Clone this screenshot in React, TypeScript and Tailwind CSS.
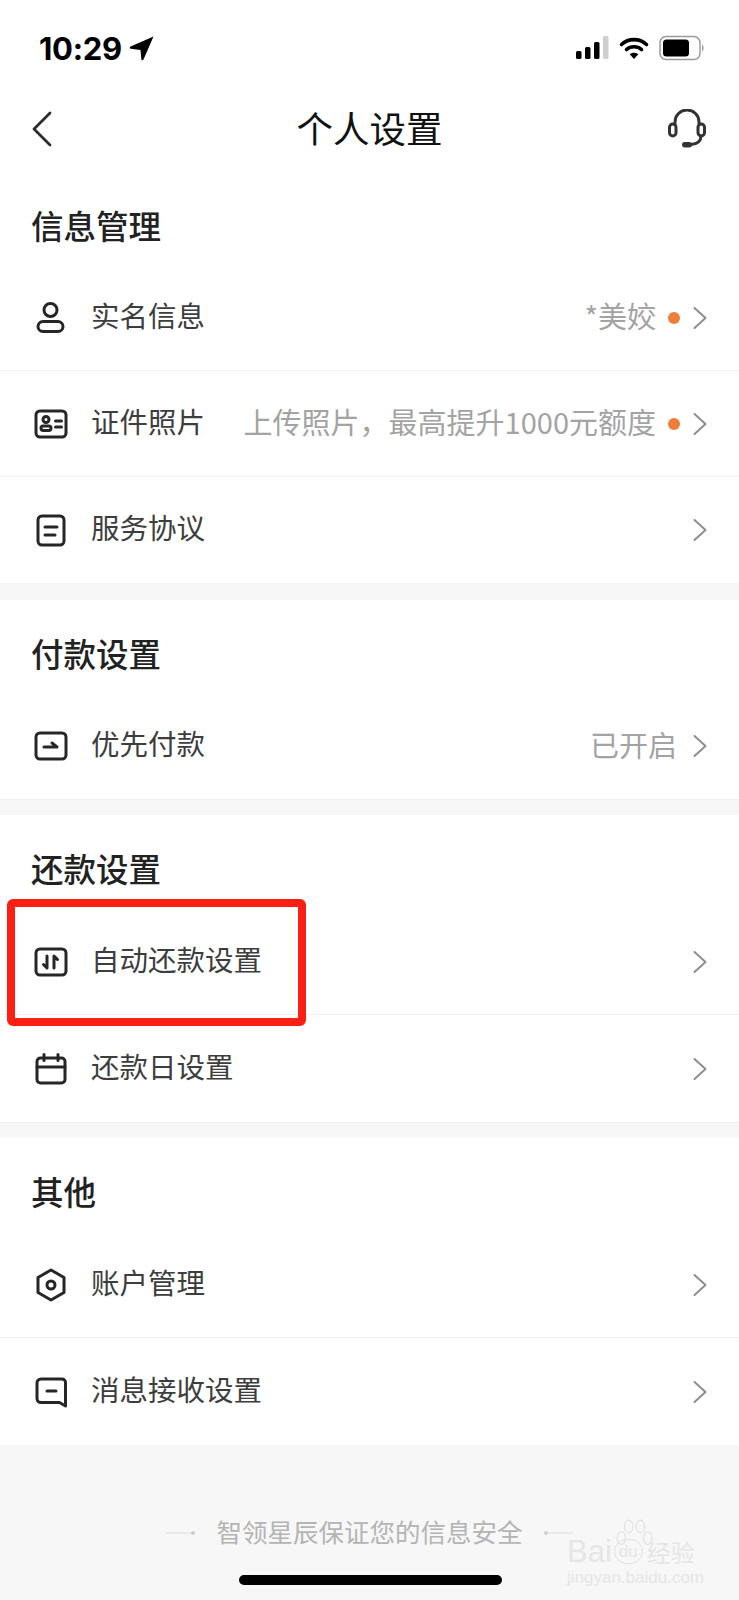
import React from "react";

const font = { fontFamily: '"Noto Sans CJK SC", "Noto Sans", sans-serif' };

const I = ({ children }: { children: React.ReactNode }) => (
  <svg width="36" height="36" viewBox="0 0 36 36" fill="none" stroke="#262626" strokeWidth="3" strokeLinecap="round" strokeLinejoin="round">
    {children}
  </svg>
);

const icons: Record<string, React.ReactNode> = {
  user: <I><circle cx="17.500" cy="10" r="6.500" /><rect x="5" y="21.500" width="25" height="10" rx="5" /></I>,
  id: <I><rect x="3" y="5" width="30" height="26" rx="4" /><circle cx="13" cy="13.500" r="3" /><rect x="8" y="20" width="10" height="4.400" rx="2.200" /><path d="M22.500 15h6M22.500 21h6" /></I>,
  doc: <I><rect x="5" y="4" width="26" height="29" rx="4" /><path d="M12 15h12M12 23h10" /></I>,
  card: <I><rect x="3" y="5" width="30" height="26" rx="4" /><path d="M11 19h13l-5-4" /></I>,
  swap: <I><rect x="3" y="5" width="30" height="26" rx="4" /><path d="M14 12v12M14 24l-3.500-3.500M21 24V12M21 12l3.500 3.500" /></I>,
  cal: <I><rect x="4" y="7" width="28" height="25" rx="3.500" /><path d="M4 16h28M11 3.500v6M25 3.500v6" /></I>,
  hex: <I><path d="M18 3 31 10.500v15L18 33 5 25.500v-15z" /><circle cx="18" cy="18" r="4" /></I>,
  msg: <I><path d="M8 5h21a3.500 3.500 0 0 1 3.500 3.500V32l-6-3.500H8A4 4 0 0 1 4 24.500V9a4 4 0 0 1 4-4z" /><path d="M14 17h9" /></I>,
};

const Chevron = () => (
  <svg width="14" height="24" viewBox="0 0 14 24" fill="none" stroke="#8e8e8e" strokeWidth="2" strokeLinecap="round" strokeLinejoin="round" className="shrink-0">
    <path d="M1.500 2 12.500 12 1.500 22" />
  </svg>
);

function Row({ icon, label, value, dot, last, h = 106 }: { icon: string; label: string; value?: string; dot?: boolean; last?: boolean; h?: number }) {
  return (
    <div style={{ height: h }} className={`flex items-center pl-[33px] pr-[32px] ${last ? "" : "border-b border-[#f2f2f2]"}`}>
      <div className="w-[36px] h-[36px] mr-[22px] shrink-0">{icons[icon]}</div>
      <span className="text-[28.500px] leading-none text-[#3d3d3d] pb-[5px]">{label}</span>
      <span className="flex-1" />
      {value && <span className="text-[29px] leading-none text-[#a3a3a3] pb-[4px]">{value}</span>}
      {dot && <span className="w-[12px] h-[12px] rounded-full bg-[#ee7d3b] ml-[12px]" />}
      <span className={dot ? "ml-[13px]" : "ml-[16px]"}><Chevron /></span>
    </div>
  );
}

function Title({ children, h = 93 }: { children: React.ReactNode; h?: number }) {
  return (
    <div style={{ height: h }} className="flex items-center px-[31px] pt-[13px]">
      <span className="text-[32.500px] leading-none font-medium text-[#222222]">{children}</span>
    </div>
  );
}

export default function App() {
  return (
    <div style={font} className="relative w-[739px] h-[1600px] bg-[#f7f7f7] overflow-hidden">
      <div className="bg-white">
        <div className="flex items-center justify-between h-[92px] pt-[4px] pl-[39px] pr-[34px]">
          <div className="flex items-center gap-[7px]">
            <span style={{ fontFamily: "Inter, sans-serif" }} className="text-[31px] font-bold tracking-[-0.3px] leading-none text-black">10:29</span>
            <svg width="26" height="26" viewBox="0 0 26 26"><path d="M24.500 1.500 14.500 24.500c-.6 1.200-2 1-2.200-.3l-.8-9.200-9.700-1.300C.6 13.400.4 12 1.600 11.400z" fill="#000" /></svg>
          </div>
          <div className="flex items-center gap-[9px]">
            <svg width="33" height="24" viewBox="0 0 33 24">
              <rect x="0" y="15" width="5.500" height="8" rx="1.500" fill="#000" />
              <rect x="9" y="11" width="5.500" height="12" rx="1.500" fill="#000" />
              <rect x="18" y="6" width="5.500" height="17" rx="1.500" fill="#000" />
              <rect x="27" y="0" width="5.500" height="23" rx="1.500" fill="#cfcfcf" />
            </svg>
            <svg width="32" height="24" viewBox="0 0 30 24" fill="none" stroke="#000" strokeWidth="3.600" strokeLinecap="round">
              <path d="M2.500 8.500c7-6.500 18-6.500 25 0" />
              <path d="M7.500 13.500c4-3.700 11-3.700 15 0" />
              <path d="M15 23l-4.300-4.800c2.500-2 6.100-2 8.600 0z" fill="#000" stroke="none" />
            </svg>
            <svg width="46" height="26" viewBox="0 0 46 26" fill="none">
              <rect x="1" y="1.500" width="40" height="23" rx="6" stroke="#9a9a9a" strokeWidth="1.500" />
              <rect x="4" y="4.500" width="26" height="17" rx="3.500" fill="#000" />
              <path d="M43 9.500c2 .8 2 6.200 0 7z" fill="#9a9a9a" />
            </svg>
          </div>
        </div>

        <div className="flex items-center justify-between h-[76px] pl-[32px] pr-[32px] pb-[2px]">
          <div className="w-[40px]">
            <svg width="20" height="36" viewBox="0 0 20 36" fill="none" stroke="#2b2b2b" strokeWidth="2.800" strokeLinecap="round" strokeLinejoin="round">
              <path d="M18 2 2 18l16 16" />
            </svg>
          </div>
          <span className="text-[36.500px] leading-none text-[#111111] pb-[2px]">个人设置</span>
          <svg width="40" height="40" viewBox="0 0 40 40" fill="none" stroke="#333333" strokeWidth="3" strokeLinecap="round">
            <path d="M8 15v-2a12 12 0 0 1 24 0v2" />
            <rect x="2.500" y="15" width="6.500" height="12" rx="3.250" />
            <rect x="31" y="15" width="6.500" height="12" rx="3.250" />
            <path d="M34 27c0 5-4 8-10 8.500" />
            <rect x="15" y="33" width="10" height="5.500" rx="2.750" fill="#333333" stroke="none" />
          </svg>
        </div>

        <div style={{ height: 97 }} className="flex items-center px-[31px] pt-[17px]">
          <span className="text-[32.500px] leading-none font-medium text-[#222222]">信息管理</span>
        </div>
        <Row icon="user" label="实名信息" value="*美姣" dot />
        <Row icon="id" label="证件照片" value="上传照片，最高提升1000元额度" dot />
        <Row icon="doc" label="服务协议" last />
      </div>

      <div className="bg-white mt-[17px] border-b border-[#f0f0f0]">
        <Title>付款设置</Title>
        <Row icon="card" label="优先付款" value="已开启" last />
      </div>

      <div className="bg-white mt-[15px] border-b border-[#f0f0f0]">
        <Title h={94}>还款设置</Title>
        <Row icon="swap" label="自动还款设置" />
        <Row icon="cal" label="还款日设置" last h={107} />
      </div>

      <div className="bg-white mt-[15px]">
        <Title h={94}>其他</Title>
        <Row icon="hex" label="账户管理" />
        <Row icon="msg" label="消息接收设置" last h={107} />
      </div>

      <div className="flex items-center justify-center h-[176px]">
        <svg width="30" height="6" viewBox="0 0 30 6" className="mr-[20px]"><path d="M0 3h28" stroke="#dcdcdc" strokeWidth="1" /><circle cx="27" cy="3" r="2" fill="#cfcfcf" /></svg>
        <span className="text-[25.500px] leading-none text-[#b4b4b4] pb-[4px]">智领星辰保证您的信息安全</span>
        <svg width="30" height="6" viewBox="0 0 30 6" className="ml-[20px]"><path d="M2 3h28" stroke="#dcdcdc" strokeWidth="1" /><circle cx="3" cy="3" r="2" fill="#cfcfcf" /></svg>
      </div>

      <div className="absolute left-[239px] top-[1575px] w-[263px] h-[10px] rounded-full bg-black" />

      <div className="absolute left-[7px] top-[899px] w-[299px] h-[127px] rounded-[6px] border-[8px] border-[#fb1f14]" />

      <div className="absolute left-[567px] top-[1520px] w-[140px] text-[#e6e6e6] leading-none">
        <svg width="46" height="36" viewBox="0 0 36 34" fill="none" stroke="#e2e2e2" strokeWidth="1.100" className="absolute left-[44px] top-[-2px]">
          <ellipse cx="6" cy="19" rx="4" ry="6" />
          <ellipse cx="13" cy="8" rx="4" ry="6" />
          <ellipse cx="24" cy="8" rx="4" ry="6" />
          <ellipse cx="31" cy="19" rx="4" ry="6" />
        </svg>
        <div className="flex items-center gap-[2px] pt-[16px]" style={{ fontFamily: '"Liberation Sans", "Noto Sans CJK SC", sans-serif' }}>
          <span className="text-[31px] leading-none font-normal">Bai</span>
          <span className="text-[17px] leading-none border border-[#e2e2e2] rounded-full px-[4px] py-[3px]">du</span>
          <span style={font} className="text-[24px] leading-none ml-[2px]">经验</span>
        </div>
        <div style={{ fontFamily: '"Liberation Sans", sans-serif' }} className="text-[17px] leading-none mt-[2px]">jingyan.baidu.com</div>
      </div>
    </div>
  );
}
